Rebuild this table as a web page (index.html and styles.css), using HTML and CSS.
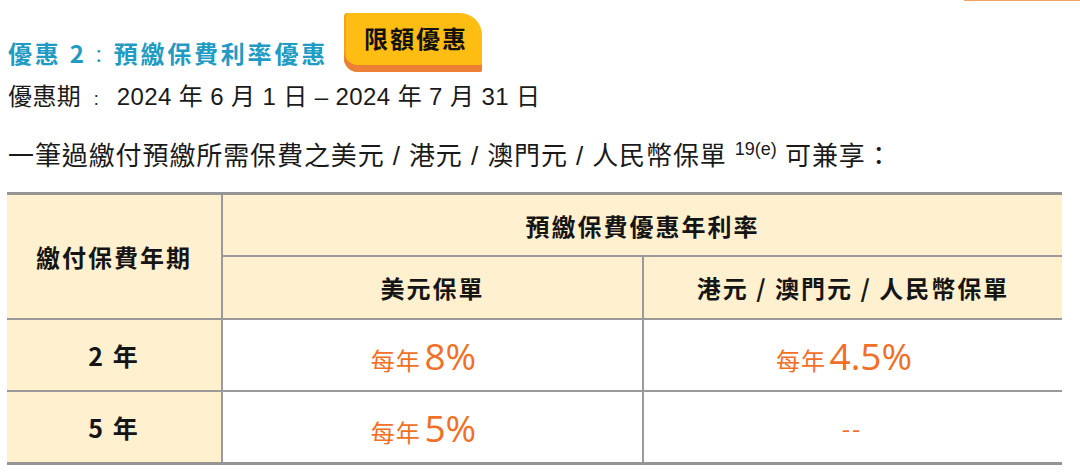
FILE: index.html
```html
<!DOCTYPE html>
<html lang="zh-Hant">
<head>
<meta charset="utf-8">
<link rel="stylesheet" href="styles.css">
</head>
<body>
<div class="top-line"></div>
<div class="page">
  <div class="title-row">
    <h2 class="title">優惠 2<span class="colon">：</span>預繳保費利率優惠</h2>
    <span class="badge">限額優惠</span>
  </div>
  <p class="period">優惠期<span class="colon-sm">：</span> 2024 年 6 月 1 日 – 2024 年 7 月 31 日</p>
  <p class="desc">一筆過繳付預繳所需保費之美元 / 港元 / 澳門元 / 人民幣保單 <sup>19(e)</sup> 可兼享：</p>
  <table class="rates">
    <colgroup>
      <col class="c1"><col class="c2"><col class="c3">
    </colgroup>
    <thead>
      <tr class="h1">
        <th rowspan="2" class="term-h">繳付保費年期</th>
        <th colspan="2">預繳保費優惠年利率</th>
      </tr>
      <tr class="h2">
        <th>美元保單</th>
        <th>港元 / 澳門元 / 人民幣保單</th>
      </tr>
    </thead>
    <tbody>
      <tr>
        <td class="term">2 年</td>
        <td class="val"><span class="rate"><span class="pre">每年</span> <span class="num">8%</span></span></td>
        <td class="val"><span class="rate"><span class="pre">每年</span> <span class="num">4.5%</span></span></td>
      </tr>
      <tr>
        <td class="term">5 年</td>
        <td class="val"><span class="rate"><span class="pre">每年</span> <span class="num">5%</span></span></td>
        <td class="val"><span class="rate dash">--</span></td>
      </tr>
    </tbody>
  </table>
</div>
</body>
</html>
```

FILE: styles.css
```css
html, body {
  margin: 0;
  padding: 0;
  background: #ffffff;
}
body {
  font-family: "Noto Sans CJK TC", "Noto Sans", sans-serif;
  color: #1a1a1a;
  width: 1080px;
  height: 474px;
  overflow: hidden;
  position: relative;
}
.top-line {
  position: absolute;
  top: 0;
  left: 964px;
  width: 116px;
  height: 1px;
  background: #f0a060;
}
.page {
  padding: 13px 0 0 7px;
}
.title-row {
  display: flex;
  align-items: flex-end;
  gap: 16px;
  height: 59px;
}
.title {
  margin: 0 0 0 1px;
  font-size: 24px;
  font-weight: 700;
  letter-spacing: 2.8px;
  color: #1f9bc4;
  line-height: 30px;
  padding-bottom: 2px;
}
.title .colon {
  font-weight: 400;
  font-size: 18px;
  margin: 0 3px;
}
.badge {
  display: block;
  align-self: flex-start;
  background: #fdbd12;
  border-radius: 4px 22px 2px 14px;
  box-shadow: inset 0 -7px 0 #ec8034, inset 3px 0 0 -1px #f5a020;
  font-size: 24px;
  font-weight: 700;
  color: #111;
  letter-spacing: 2px;
  padding: 9px 0 0 20px;
  height: 50px;
  width: 118px;
  line-height: 32px;
}
.period {
  margin: 8px 0 0 1px;
  font-family: "Liberation Sans", "Noto Sans CJK TC", sans-serif;
  font-size: 24px;
  letter-spacing: 0.4px;
  line-height: 34px;
  color: #1a1a1a;
}
.colon-sm {
  font-family: "Noto Sans CJK TC", sans-serif;
  font-size: 14px;
  margin: 0 6px 0 8px;
}
.desc {
  margin: 23px 0 0 1px;
  font-family: "Liberation Sans", "Noto Sans CJK TC", sans-serif;
  font-size: 26px;
  letter-spacing: 0.9px;
  line-height: 34px;
  color: #1a1a1a;
}
.desc sup {
  font-size: 18px;
  letter-spacing: 0;
  vertical-align: 10px;
  line-height: 0;
}
.rates {
  margin-top: 19px;
  border-collapse: collapse;
  width: 1055px;
  table-layout: fixed;
}
.c1 { width: 215px; }
.c2 { width: 421px; }
.c3 { width: 419px; }
.rates th, .rates td {
  border: 2px solid #9a9a9a;
  text-align: center;
  padding: 0;
}
.rates tr > :first-child { border-left: none; }
.rates tr > :last-child { border-right: none; }
.rates th[colspan] { border-right: none; }
.rates thead tr.h1 th { border-top: 3px solid #959595; }
.rates tbody tr:last-child td { border-bottom: 3px solid #959595; }
.rates th {
  background: #fff0cf;
  font-size: 24px;
  font-weight: 700;
  color: #151515;
  letter-spacing: 2px;
}
.rates .h1 th { height: 60px; }
.rates .h2 th { height: 61px; }
.rates tbody td { height: 70px; }
.rates td.term {
  background: #fff0cf;
  font-size: 25px;
  font-weight: 700;
  color: #151515;
  letter-spacing: 2px;
}
.rates td.val {
  padding-right: 18px;
}
.rate {
  color: #f07028;
  display: inline-block;
}
.rate .pre {
  font-size: 24px;
  letter-spacing: 1px;
}
.rate .num {
  font-size: 37px;
  font-family: "Open Sans", "Noto Sans", sans-serif;
  font-weight: 400;
}
.rate.dash {
  font-size: 24px;
  letter-spacing: 2px;
  margin-left: 16px;
}
```
